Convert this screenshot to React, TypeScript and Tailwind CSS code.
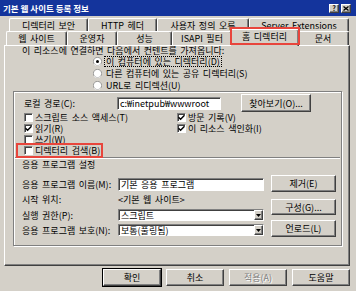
import React from 'react';

const raised =
  'border border-t-white border-l-white border-r-[#404040] border-b-[#404040] shadow-[inset_-1px_-1px_0_#808080] bg-[#d4d0c8]';
const sunken =
  'border border-t-[#808080] border-l-[#808080] border-r-white border-b-white shadow-[inset_1px_1px_0_#404040] bg-white';

function Tab({ label, width }: { label: string; width: string }) {
  return (
    <div
      className={`${width} h-full flex items-center justify-center rounded-t-[2px] border-t border-l border-white border-r border-r-[#404040] shadow-[inset_-1px_0_0_#808080] whitespace-nowrap`}
    >
      {label}
    </div>
  );
}

function Check({ checked, label }: { checked?: boolean; label: string }) {
  return (
    <div className="flex items-center gap-[2px]">
      <div className={`w-[9px] h-[9px] ${sunken} flex items-center justify-center`}>
        {checked && (
          <svg width="7" height="7" viewBox="0 0 7 7">
            <path d="M0.5 3.2 L2.6 5.3 L6.5 1.2" fill="none" stroke="black" strokeWidth="1.4" />
          </svg>
        )}
      </div>
      <span className="block leading-[9px]">{label}</span>
    </div>
  );
}

function Radio({ checked, label, focus }: { checked?: boolean; label: string; focus?: boolean }) {
  return (
    <div className="h-[12px] flex items-center gap-[2px]">
      <svg width="9" height="9" viewBox="0 0 12 12">
        <circle cx="6" cy="6" r="5.5" fill="white" stroke="#808080" />
        <path d="M1.5 9.5 A5 5 0 0 0 10 10" fill="none" stroke="white" />
        {checked && <circle cx="6" cy="6" r="2" fill="black" />}
      </svg>
      <span className={focus ? 'block px-[1px] border border-dotted border-black' : 'block px-[2px]'}>{label}</span>
    </div>
  );
}

function Button({ label, className = '', disabled }: { label: string; className?: string; disabled?: boolean }) {
  return (
    <div
      className={`${raised} flex items-center justify-center whitespace-nowrap ${className} ${
        disabled ? 'text-[#808080] [text-shadow:1px_1px_0_#fff]' : ''
      }`}
    >
      {label}
    </div>
  );
}

function Select({ value }: { value: string }) {
  return (
    <div className={`w-[146px] h-[12px] ${sunken} flex items-center`}>
      <span className="flex-1 pl-[2px]">{value}</span>
      <div className={`w-[9px] h-full ${raised} flex items-center justify-center`}>
        <svg width="5" height="3" viewBox="0 0 5 3">
          <path d="M0 0 H5 L2.5 3 Z" fill="black" />
        </svg>
      </div>
    </div>
  );
}

export default function App() {
  return (
    <div className="w-[356px] h-[291px] overflow-hidden bg-[#d4d0c8] text-black text-[9px] leading-none [word-spacing:1.5px] font-['Noto_Sans_CJK_KR','Noto_Sans',sans-serif] relative flex flex-col">
      {/* title bar */}
      <div className="h-[16px] shrink-0 bg-[#14349c] flex items-center pl-[3px] pr-[5px]">
        <span className="flex-1 text-white font-bold text-[8.5px] [word-spacing:0px]">기본 웹 사이트 등록 정보</span>
        <div className={`w-[10px] h-[9px] ${raised} flex items-center justify-center text-[7px] font-bold`}>?</div>
        <div className={`ml-[2px] w-[10px] h-[9px] ${raised} flex items-center justify-center`}>
          <svg width="6" height="5" viewBox="0 0 6 5">
            <path d="M0.5 0.5 L5.5 4.5 M5.5 0.5 L0.5 4.5" stroke="black" strokeWidth="1.3" />
          </svg>
        </div>
      </div>

      {/* tabs */}
      <div className="h-[29px] shrink-0 flex flex-col">
        <div className="mt-[2px] ml-[9px] h-[13px] flex">
          <Tab label="디렉터리 보안" width="w-[79px]" />
          <Tab label="HTTP 헤더" width="w-[69px]" />
          <Tab label="사용자 정의 오류" width="w-[92px]" />
          <Tab label="Server Extensions" width="w-[100px]" />
        </div>
        <div className="ml-[6px] h-[14px] flex items-start">
          <Tab label="웹 사이트" width="w-[61px]" />
          <Tab label="운영자" width="w-[50px]" />
          <Tab label="성능" width="w-[55px]" />
          <Tab label="ISAPI 필터" width="w-[60px]" />
          <div className="relative z-10 -mx-[2px] -mt-[2px] w-[69px] h-[17px] bg-[#d4d0c8] flex items-center justify-center pb-[3px] rounded-t-[2px] border-t border-l border-white border-r border-r-[#404040] shadow-[inset_-1px_0_0_#808080]">
            홈 디렉터리
          </div>
          <Tab label="문서" width="w-[52px]" />
        </div>
      </div>

      {/* panel */}
      <div className="ml-[4px] w-[346px] h-[221px] shrink-0 border border-t-white border-l-white border-r-[#404040] border-b-[#404040] shadow-[inset_-1px_-1px_0_#808080] flex flex-col">
        <div className="h-[9px] pl-[17px] flex items-center">이 리소스에 연결하면 다음에서 컨텐트를 가져옵니다:</div>
        <div className="pl-[88px] flex flex-col">
          <Radio checked focus label="이 컴퓨터에 있는 디렉터리(D)" />
          <Radio label="다른 컴퓨터에 있는 공유 디렉터리(S)" />
          <Radio label="URL로 리디렉션(U)" />
        </div>

        <div className="ml-[8px] w-[329px] h-[155px] border border-[#808080] shadow-[inset_1px_1px_0_#fff,1px_1px_0_#fff] flex flex-col">
          <div className="mt-[2px] h-[18px] pl-[10px] flex items-center">
            <span className="w-[93px]">로컬 경로(C):</span>
            <div className={`w-[104px] h-[13px] ${sunken} flex items-center pl-[2px]`}>c:₩inetpub₩wwwroot</div>
            <Button label="찾아보기(O)..." className="ml-[20px] w-[70px] h-[18px]" />
          </div>
          <div className="h-[11px] pl-[10px] flex items-center">
            <div className="w-[153px]">
              <Check label="스크립트 소스 액세스(T)" />
            </div>
            <Check checked label="방문 기록(V)" />
          </div>
          <div className="h-[11px] pl-[10px] flex items-center">
            <div className="w-[153px]">
              <Check checked label="읽기(R)" />
            </div>
            <Check checked label="이 리소스 색인화(I)" />
          </div>
          <div className="h-[11px] pl-[10px] flex items-center">
            <Check label="쓰기(W)" />
          </div>
          <div className="h-[11px] pl-[10px] flex items-center">
            <Check label="디렉터리 검색(B)" />
          </div>
          <div className="mx-[1px] mt-[1px] border-t border-t-[#808080] border-b border-b-white" />
          <div className="h-[11px] pl-[8px] flex items-center">응용 프로그램 설정</div>

          <div className="mt-[5px] flex">
            <div className="mt-[2px] pl-[8px] w-[250px] flex flex-col">
              <div className="h-[14px] flex items-center">
                <span className="w-[96px]">응용 프로그램 이름(M):</span>
                <div className={`w-[146px] h-[13px] ${sunken} flex items-center pl-[2px]`}>기본 응용 프로그램</div>
              </div>
              <div className="h-[16px] flex items-center">
                <span className="w-[96px]">시작 위치:</span>
                <span>&lt;기본 웹 사이트&gt;</span>
              </div>
              <div className="mt-[1px] h-[14px] flex items-center">
                <span className="w-[96px]">실행 권한(P):</span>
                <Select value="스크립트" />
              </div>
              <div className="mt-[1px] h-[14px] flex items-center">
                <span className="w-[96px]">응용 프로그램 보호(N):</span>
                <Select value="보통(풀링됨)" />
              </div>
            </div>
            <div className="ml-[7px] w-[65px] flex flex-col">
              <Button label="제거(E)" className="h-[17px]" />
              <Button label="구성(G)..." className="mt-[7px] h-[16px]" />
              <Button label="언로드(L)" className="mt-[5px] h-[17px]" />
            </div>
          </div>
        </div>
      </div>

      {/* dialog buttons */}
      <div className="mt-[3px] pr-[6px] flex justify-end gap-[5px]">
        <Button label="확인" className="w-[58px] h-[17px] ring-1 ring-black" />
        <Button label="취소" className="w-[58px] h-[17px]" />
        <Button label="적용(A)" disabled className="w-[58px] h-[17px]" />
        <Button label="도움말" className="w-[58px] h-[17px]" />
      </div>

      {/* red highlight marks */}
      <div className="absolute left-[230px] top-[27px] w-[70px] h-[18px] border-2 border-[#e8453c] z-20" />
      <div className="absolute left-[16px] top-[143px] w-[87px] h-[15px] border-2 border-[#e8453c] z-20" />
    </div>
  );
}
